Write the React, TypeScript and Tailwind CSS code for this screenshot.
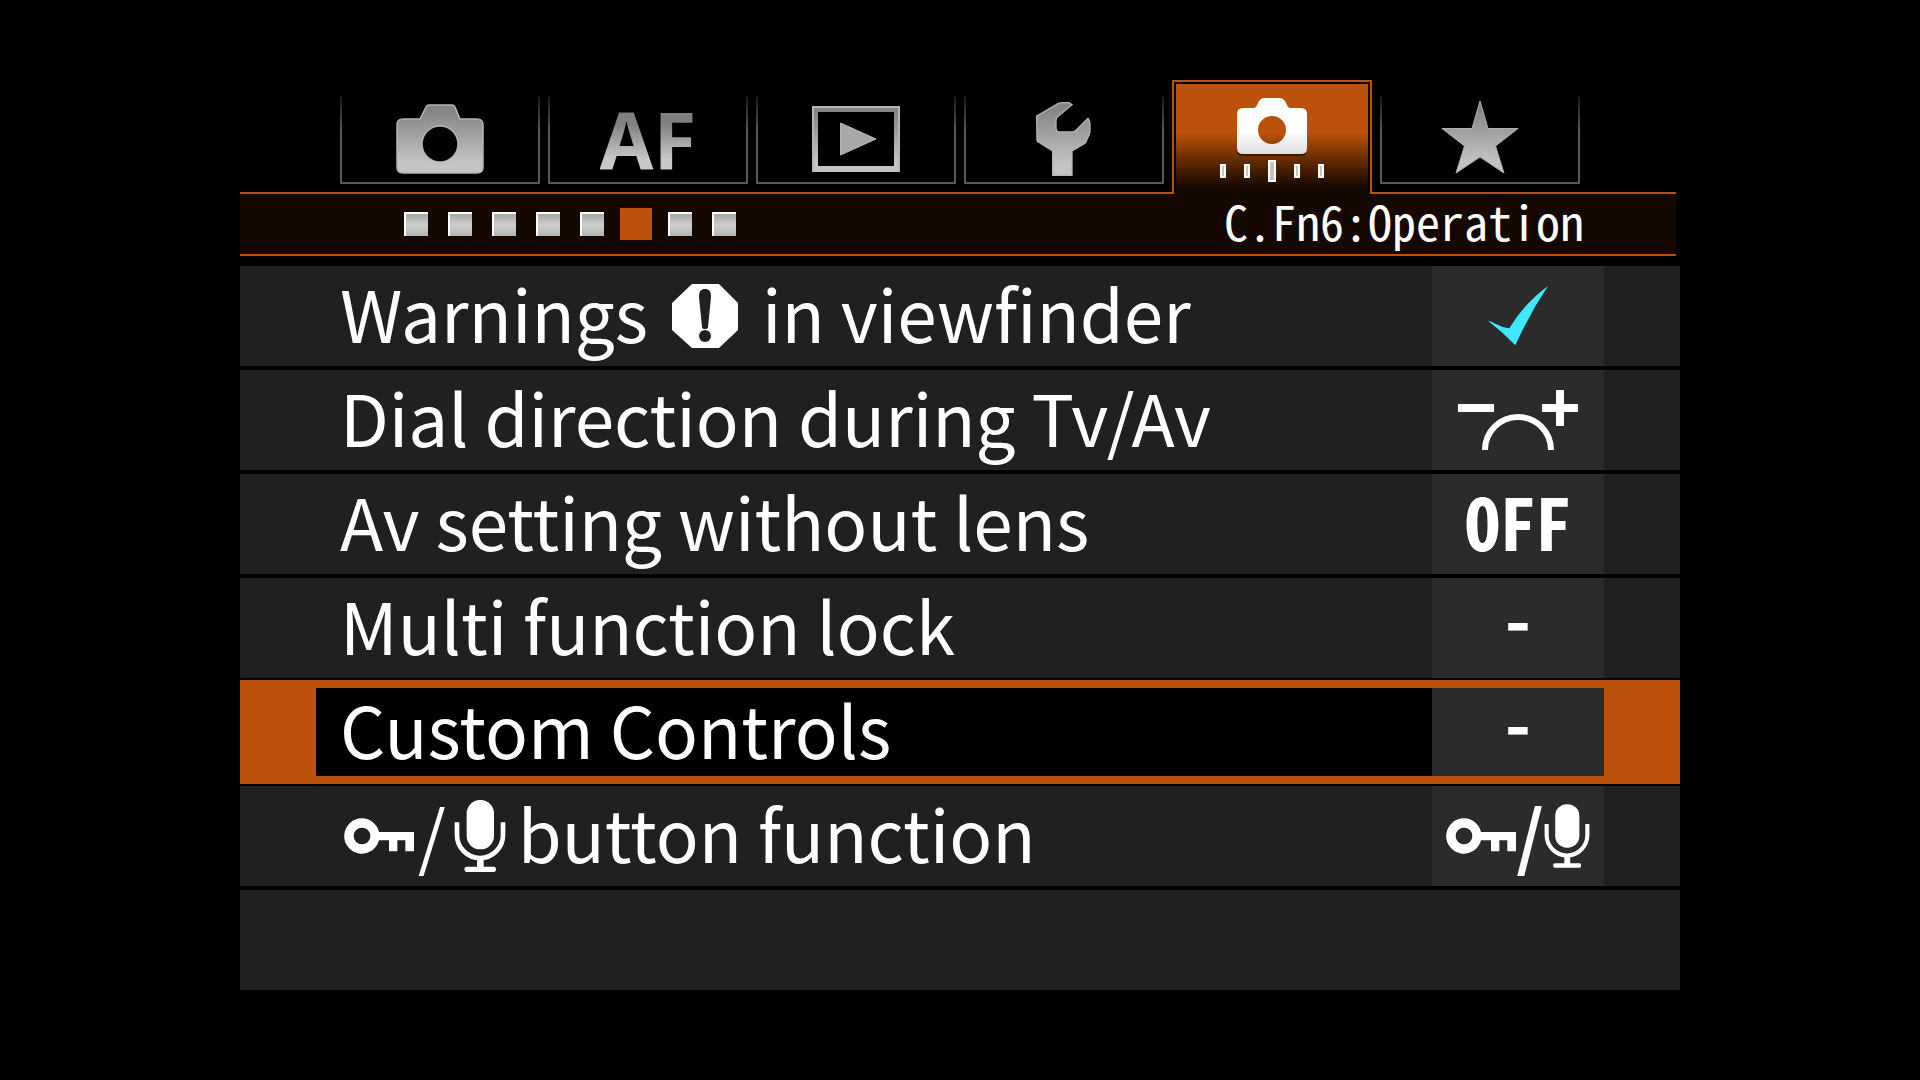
import type { ReactNode } from 'react'
import clsx from 'clsx'

interface MenuItem {
  id: string
  label: ReactNode
  value: ReactNode
}

// Shared grey gradient for the inactive tab icons
function GreyFill({ id }: { id: string }) {
  return (
    <defs>
      <linearGradient id={id} x1="0" y1="0" x2="0" y2="1">
        <stop offset="0.1" stopColor="#858585" />
        <stop offset="0.85" stopColor="#c4c4c4" />
      </linearGradient>
    </defs>
  )
}

function CameraIcon() {
  return (
    <svg width="88" height="70" viewBox="0 0 88 70" aria-hidden="true">
      <GreyFill id="camera-fill" />
      <path
        fill="url(#camera-fill)"
        stroke="#b4b4b4"
        strokeWidth="1.5"
        fillRule="evenodd"
        d="M33 1h23q2 0 3 2l5 12h17q6 0 6 6v42q0 6-6 6H7q-6 0-6-6V21q0-6 6-6h17l6-12q1-2 3-2zM44 22a18 18 0 1 0 0 36a18 18 0 1 0 0-36z"
      />
    </svg>
  )
}

function PlayIcon() {
  return (
    <svg width="88" height="66" viewBox="0 0 88 66" aria-hidden="true">
      <GreyFill id="play-fill" />
      <path fill="url(#play-fill)" fillRule="evenodd" d="M0 0h88v66H0zM6 6v54h76V6z" />
      <path fill="none" stroke="#b4b4b4" strokeWidth="2" d="M1 65V1h86v64" />
      <path fill="#a8a8a8" stroke="#b8b8b8" strokeWidth="1" d="M28.500 17v32L64 33z" />
    </svg>
  )
}

function WrenchIcon() {
  return (
    <svg width="56" height="74" viewBox="0 0 168 222" aria-hidden="true">
      <GreyFill id="wrench-fill" />
      <path
        fill="url(#wrench-fill)"
        stroke="#b4b4b4"
        strokeWidth="4"
        d="M2 42L66 5q7-3 14-3h18l10 6-44 37q-4 4-4 10v22q0 13 12 13h38q5 0 10-5l36-36q6 8 6 17v18q0 8-3 15l-9 20q-1 3-4 5l-38 23v73H50v-73L7 120q-3-2-4-6z"
      />
    </svg>
  )
}

function CustomIcon() {
  return (
    <svg width="104" height="86" viewBox="0 0 104 86" aria-hidden="true">
      <defs>
        <linearGradient id="custom-fill" x1="0" y1="0" x2="0" y2="1">
          <stop offset="0.6" stopColor="#ffffff" />
          <stop offset="1" stopColor="#dedede" />
        </linearGradient>
      </defs>
      <path fill="#000000" opacity="0.5" d="M17 48v6q0 4 6 4h58q5 0 5-5v-5z" />
      <path
        fill="url(#custom-fill)"
        fillRule="evenodd"
        d="M44 0h16q3 0 5 3l3 6 2 1h11q6 0 6 6v34q0 6-6 6H23q-6 0-6-6V16q0-6 6-6h11l2-1 3-6q2-3 5-3zM52 18a14 14 0 1 0 0 28a14 14 0 1 0 0-28z"
      />
      <path
        fill="#c8c2bd"
        stroke="#ffffff"
        strokeWidth="2"
        d="M1 67h4v12H1zM25 67h4v12h-4zM49 63h6v20h-6zM75 67h4v12h-4zM99 67h4v12h-4z"
      />
    </svg>
  )
}

function StarIcon() {
  return (
    <svg width="78" height="78" viewBox="0 0 78 78" aria-hidden="true">
      <GreyFill id="star-fill" />
      <path
        fill="url(#star-fill)"
        stroke="#b0b0b0"
        strokeWidth="1"
        d="M39 1l8 27.500h30L54.500 46 63 73 39 57 15 73l8.500-27L1 28.500h30z"
      />
    </svg>
  )
}

function WarningIcon() {
  return (
    <svg width="66" height="64" viewBox="0 0 66 64" role="img" aria-label="warning">
      <path fill="#ffffff" d="M20 0h27l19 19v27L47 64H20L0 46V19z" />
      <path fill="#202020" d="M33 5c4 0 6 2 6 8l-3 30q0 2-3 2t-3-2l-3-30c0-6 2-8 6-8z" />
      <circle cx="33" cy="52" r="6" fill="#202020" />
    </svg>
  )
}

function CheckIcon() {
  return (
    <svg width="60" height="60" viewBox="0 0 180 180" role="img" aria-label="on">
      <path fill="#3fe8fb" d="M0 104q10 2 22 9 22 12 42 14 44-74 116-127-56 84-98 178-38-40-82-74z" />
    </svg>
  )
}

function DialIcon() {
  return (
    <svg width="120" height="60" viewBox="0 0 360 180" role="img" aria-label="normal direction">
      <path fill="#ffffff" d="M0 42h108v24H0zM252 42h42V0h24v42h42v24h-42v42h-24V66h-42z" />
      <path fill="none" stroke="#ffffff" strokeWidth="18" d="M81 180a99 99 0 0 1 198 0" />
    </svg>
  )
}

function KeyIcon() {
  return (
    <svg width="70" height="36" viewBox="0 0 210 108" role="img" aria-label="lock">
      <path
        fill="#ffffff"
        fillRule="evenodd"
        d="M54 1a53 53 0 0 1 51 41h105v58h-26V67h-24v33h-25V67h-30A53 53 0 1 1 54 1zM54 29a25 25 0 1 0 0 50a25 25 0 1 0 0-50z"
      />
    </svg>
  )
}

function MicIcon({ className }: { className: string }) {
  return (
    <svg className={className} viewBox="0 0 156 216" role="img" aria-label="voice memo">
      <rect x="38" y="0" width="82" height="148" rx="40" fill="#ffffff" />
      <path fill="none" stroke="#ffffff" strokeWidth="14" d="M9 67v38a69 69 0 0 0 138 0V67" />
      <path fill="#ffffff" d="M69 172h20v28h32q5 0 5 8t-5 8H37q-6 0-6-8t6-8h32z" />
    </svg>
  )
}

// The font sits low in its line box, the bottom padding centres the capitals
function Text({ children }: { children: ReactNode }) {
  return <span className="pb-2">{children}</span>
}

const tabs = [
  { name: 'Shooting', icon: <CameraIcon /> },
  {
    name: 'AF',
    icon: (
      <span className="bg-linear-to-b from-[#808080] from-30% to-[#c8c8c8] to-75% bg-clip-text font-['Noto_Sans',sans-serif] text-[78px] leading-none font-bold text-transparent">
        AF
      </span>
    ),
  },
  { name: 'Playback', icon: <PlayIcon /> },
  { name: 'Set-up', icon: <WrenchIcon /> },
  { name: 'Custom Functions', icon: <CustomIcon /> },
  { name: 'My Menu', icon: <StarIcon /> },
]

const items: MenuItem[] = [
  {
    id: 'warnings',
    label: (
      <span className="flex items-center gap-6">
        <Text>Warnings</Text>
        <WarningIcon />
        <Text>in viewfinder</Text>
      </span>
    ),
    value: <CheckIcon />,
  },
  { id: 'dial', label: <Text>Dial direction during Tv/Av</Text>, value: <DialIcon /> },
  {
    id: 'av',
    label: <Text>Av setting without lens</Text>,
    value: <span className="pb-2 font-bold [font-feature-settings:'hwid']">OFF</span>,
  },
  { id: 'lock', label: <Text>Multi function lock</Text>, value: <span className="pb-6 font-bold">-</span> },
  { id: 'custom', label: <Text>Custom Controls</Text>, value: <span className="pb-6 font-bold">-</span> },
  {
    id: 'button',
    label: (
      <span className="flex items-center gap-1 pl-1">
        <KeyIcon />
        <Text>/</Text>
        <MicIcon className="mr-2 ml-1 h-[72px] w-[52px]" />
        <Text>button function</Text>
      </span>
    ),
    value: (
      <>
        <KeyIcon />
        <span className="pb-2 font-bold">/</span>
        <MicIcon className="h-16 w-[46px]" />
      </>
    ),
  },
]

const pages = [1, 2, 3, 4, 5, 6, 7, 8]

export default function App() {
  const activeTab = 'Custom Functions'
  const activePage = 6
  const selected = 'custom'

  return (
    <div className="min-h-screen bg-black pt-20 font-['Noto_Sans_CJK_JP',sans-serif] text-white">
      <main className="mx-auto w-3/4">
        <nav className="grid h-28 grid-cols-6 gap-2 px-[100px]">
          {tabs.map(tab =>
            tab.name === activeTab ? (
              <button
                key={tab.name}
                aria-label={tab.name}
                className="z-10 h-[114px] border-2 border-b-0 border-[#bb510b] bg-black p-0.5 pb-0"
              >
                <span className="flex h-full justify-center bg-linear-to-b from-[#bb510b] from-45% to-[#140800] to-95% pt-3.5">
                  {tab.icon}
                </span>
              </button>
            ) : (
              <button
                key={tab.name}
                aria-label={tab.name}
                className="mt-4 h-[88px] bg-linear-to-t from-[#5a5a5a] from-60% to-[#161616] p-0.5 pt-0"
              >
                <span className="flex h-full w-full items-center justify-center bg-black">{tab.icon}</span>
              </button>
            )
          )}
        </nav>

        {/* Page strip */}
        <div className="mr-1 flex h-16 items-center justify-between border-y-2 border-[#bb510b] bg-[#140800] pr-[92px] pl-[154px]">
          <div className="flex">
            {pages.map(page => (
              <button key={page} aria-label={`Page ${page}`} className="flex h-8 w-11 items-center justify-center">
                <span
                  className={clsx(
                    page === activePage
                      ? 'size-8 bg-[#bb510b]'
                      : 'size-6 border-t-2 border-l-2 border-white bg-linear-to-b from-[#a6a6a6] via-[#cfcfcf] to-[#b4b4b4]'
                  )}
                />
              </button>
            ))}
          </div>
          <h1 className="pb-2 text-[48px] leading-[52px] [font-feature-settings:'hwid']">C.Fn6:Operation</h1>
        </div>

        {/* Settings */}
        <ul className="mt-2 text-[71px] leading-[80px]">
          {items.map(item => (
            <li key={item.id}>
              <button
                className={clsx(
                  'flex h-[104px] w-full border-y-2 px-[76px] text-left',
                  selected === item.id ? 'border-[#bb510b] bg-[#bb510b] py-1.5' : 'border-black bg-[#202020]'
                )}
              >
                <span className={clsx('flex h-full flex-1 items-center pl-6', selected === item.id && 'bg-black')}>
                  {item.label}
                </span>
                <span className="flex h-full w-[172px] items-center justify-center bg-[#2b2b2b]">{item.value}</span>
              </button>
            </li>
          ))}
          <li className="h-[104px] border-y-2 border-black bg-[#202020]" />
        </ul>
      </main>
    </div>
  )
}
